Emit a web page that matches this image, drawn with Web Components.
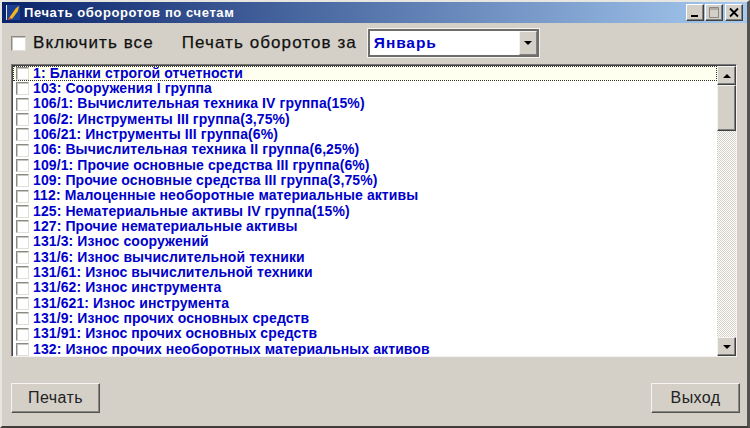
<!DOCTYPE html>
<html><head><meta charset="utf-8"><title>Печать</title>
<style>
html,body{margin:0;padding:0;background:#d4d0c8;width:750px;height:428px;overflow:hidden}
</style></head><body>
<template id="t-window"><style>
:host{display:flex;flex-direction:column;box-sizing:border-box;width:750px;height:428px;background:#d4d0c8;
border-style:solid;border-width:2px 3px 2px 2px;border-color:#e8e6e0 #55534f #3f3e3b #e8e6e0;font-family:"Liberation Sans",sans-serif;color:#111}
.title{height:21px;flex:none;display:flex;align-items:center;gap:3px;background:linear-gradient(90deg,#0a246a,#a6caf0);padding:0 4px 0 3px;color:#fff;font:bold 13px "Liberation Sans",sans-serif;letter-spacing:.6px}
.name{flex:1}
svg{display:block}
.btns{display:flex;align-items:center}
</style><div class="title"><svg width="16" height="17" viewBox="0 0 16 17"><rect x="1" y="1" width="14" height="15" fill="#1c3f94"/><path d="M1 1h1v15H1z" fill="#dfe6f2"/><path d="M4 14L11 4l3-2-1 5-6 8z" fill="#efb81e"/><path d="M3 16l1-3 3 2z" fill="#d0562a"/></svg><span class="name"><slot name="title"></slot></span><span class="btns"><slot name="controls"></slot></span></div><slot></slot></template>

<template id="t-cap"><style>
:host{display:flex;box-sizing:border-box;width:18px;height:17px;background:#d4d0c8;border:1px solid;border-color:#fff #404040 #404040 #fff;box-shadow:inset -1px -1px 0 #808080;align-items:center;justify-content:center}
:host([kind=max]){margin:0 2px 0 1px;width:18px}svg{display:block}
</style><svg width="12" height="11" viewBox="0 0 12 11"><path id="p" fill="none" stroke="#000"/></svg></template>

<template id="t-check"><style>
:host{display:block;flex:none;box-sizing:border-box;width:var(--s,13px);height:var(--s,13px);background:#fff;border:1px solid;border-color:#8c8a85 #e0ded8 #e0ded8 #8c8a85;box-shadow:inset 1px 1px 0 #c9c6bf}
</style></template>

<template id="t-button"><style>
:host{display:flex;box-sizing:border-box;align-items:center;justify-content:center;height:30px;background:#d4d0c8;border:1px solid;border-color:#f5f4f0 #55534f #55534f #f5f4f0;box-shadow:inset -1px -1px 0 #8a8883;font:16px "Liberation Sans",sans-serif;letter-spacing:.4px;color:#222}
</style><slot></slot></template>

<template id="t-row"><style>
:host{display:flex;align-items:center;gap:4px;height:15.33px;box-sizing:border-box;padding-left:3px;color:#0000cc;font:bold 14px/15px "Liberation Sans",sans-serif;white-space:nowrap;letter-spacing:.1px;--s:13px}
:host([focus]){outline:1px dotted #333;outline-offset:-1px;background:#fffff0}
span{position:relative;top:-.5px}
</style><slot name="c"></slot><span><slot></slot></span></template>

<template id="t-scroll"><style>
:host{display:flex;flex-direction:column;flex:none;width:19px;background:repeating-conic-gradient(#d4d0c8 0 25%,#fff 0 50%) 0 0/2px 2px}
.b{height:19px;flex:none;box-sizing:border-box;background:#d4d0c8;border:1px solid;border-color:#f5f4f0 #404040 #404040 #f5f4f0;box-shadow:inset -1px -1px 0 #808080;display:flex;align-items:center;justify-content:center}
.thumb{height:46px;box-sizing:border-box;background:#d4d0c8;border:1px solid;border-color:#f5f4f0 #404040 #404040 #f5f4f0;box-shadow:inset -1px -1px 0 #808080}
.f{flex:1}
i{display:block;width:0;height:0;border:4px solid transparent;border-top:0;border-bottom:4px solid #000}
i.d{border-bottom:0;border-top:4px solid #000}
</style><div class="b"><i></i></div><div class="thumb"></div><div class="f"></div><div class="b"><i class="d"></i></div></template>

<template id="t-list"><style>
:host{display:flex;box-sizing:border-box;height:293px;margin:0 10px 0 9px;border:1px solid;border-color:#777 #f4f3ef #f4f3ef #777;box-shadow:inset 1px 1px 0 #444;padding:1px 0 0 1px;background:#fff;overflow:hidden}
.rows{flex:1;min-width:0;overflow:hidden}
</style><div class="rows"><slot></slot></div><slot name="scroll"></slot></template>

<template id="t-combo"><style>
:host{display:flex;box-sizing:border-box;width:171px;height:28px;background:#fff;border:2px solid #6f6d69;outline:1px solid #f4f3ef;outline-offset:0;align-items:center;font:bold 15.5px "Liberation Sans",sans-serif;color:#0000cc;letter-spacing:.9px;-webkit-text-stroke:0}
span{flex:1;padding-left:4px}
.b{width:18px;height:24px;box-sizing:border-box;background:#d4d0c8;border:1px solid;border-color:#f5f4f0 #808080 #808080 #f5f4f0;display:flex;align-items:center;justify-content:center}
i{display:block;width:0;height:0;border:4px solid transparent;border-bottom:0;border-top:4px solid #000}
</style><span><slot></slot></span><div class="b"><i></i></div></template>

<template id="t-toolbar"><style>
:host{display:flex;align-items:center;height:28px;margin-top:6px;padding-left:9px;font:17px "Liberation Sans",sans-serif;letter-spacing:1.08px;color:#111;-webkit-text-stroke:.25px #111;--s:15px;flex:none}
.gap{width:28px;flex:none}.gap2{width:11px;flex:none}
</style><slot name="check"></slot><span style="width:7px;flex:none"></span><span><slot name="a"></slot></span><span class="gap"></span><span><slot name="b"></slot></span><span class="gap2"></span><slot name="combo"></slot></template>

<template id="t-footer"><style>
:host{display:flex;justify-content:space-between;padding:0 7px 0 9px;margin-top:26px;flex:none}
</style><slot></slot></template>

<script>
function reg(tag,tid,init){customElements.define(tag,class extends HTMLElement{constructor(){super();const s=this.attachShadow({mode:'open'});s.appendChild(document.getElementById(tid).content.cloneNode(true));}connectedCallback(){init&&init(this.shadowRoot,this);}});}
reg('x-window','t-window');
reg('x-cap','t-cap',(s,h)=>{const k=h.getAttribute('kind');const p=s.getElementById('p');
 p.setAttribute('d',k==='min'?'M2 9h7':k==='max'?'M1.5 .5h9v10h-9zM1.5 2h9':'M2 1.5l8 8M10 1.5l-8 8');
 p.setAttribute('stroke-width',k==='close'?'1.8':k==='min'?'2':'1');if(k==='max')p.setAttribute('stroke','#8a8883');});
reg('x-check','t-check');reg('x-button','t-button');reg('x-row','t-row');reg('x-scroll','t-scroll');reg('x-list','t-list');reg('x-combo','t-combo');reg('x-toolbar','t-toolbar');reg('x-footer','t-footer');
</script>

<x-window>
<span slot="title">Печать обороротов по счетам</span>
<x-cap slot="controls" kind="min"></x-cap><x-cap slot="controls" kind="max"></x-cap><x-cap slot="controls" kind="close"></x-cap>
<x-toolbar><x-check slot="check"></x-check><span slot="a">Включить все</span><span slot="b">Печать оборотов за</span><x-combo slot="combo">Январь</x-combo></x-toolbar>
<div style="height:7px;flex:none"></div>
<x-list id="list"><x-scroll slot="scroll"></x-scroll></x-list>
<x-footer><x-button style="width:89px">Печать</x-button><x-button style="width:89px">Выход</x-button></x-footer>
</x-window>
<script>
const L=["1: Бланки строгой отчетности","103: Сооружения I группа","106/1: Вычислительная техника IV группа(15%)","106/2: Инструменты III группа(3,75%)","106/21: Инструменты III группа(6%)","106: Вычислительная техника II группа(6,25%)","109/1: Прочие основные средства III группа(6%)","109: Прочие основные средства III группа(3,75%)","112: Малоценные необоротные материальные активы","125: Нематериальные активы IV группа(15%)","127: Прочие нематериальные активы","131/3: Износ сооружений","131/6: Износ вычислительной техники","131/61: Износ вычислительной техники","131/62: Износ инструмента","131/621: Износ инструмента","131/9: Износ прочих основных средств","131/91: Износ прочих основных средств","132: Износ прочих необоротных материальных активов"];
const list=document.getElementById('list');
L.forEach((t,i)=>{const r=document.createElement('x-row');if(!i)r.setAttribute('focus','');const c=document.createElement('x-check');c.slot='c';r.append(c,t);list.appendChild(r);});
</script>
</body></html>
